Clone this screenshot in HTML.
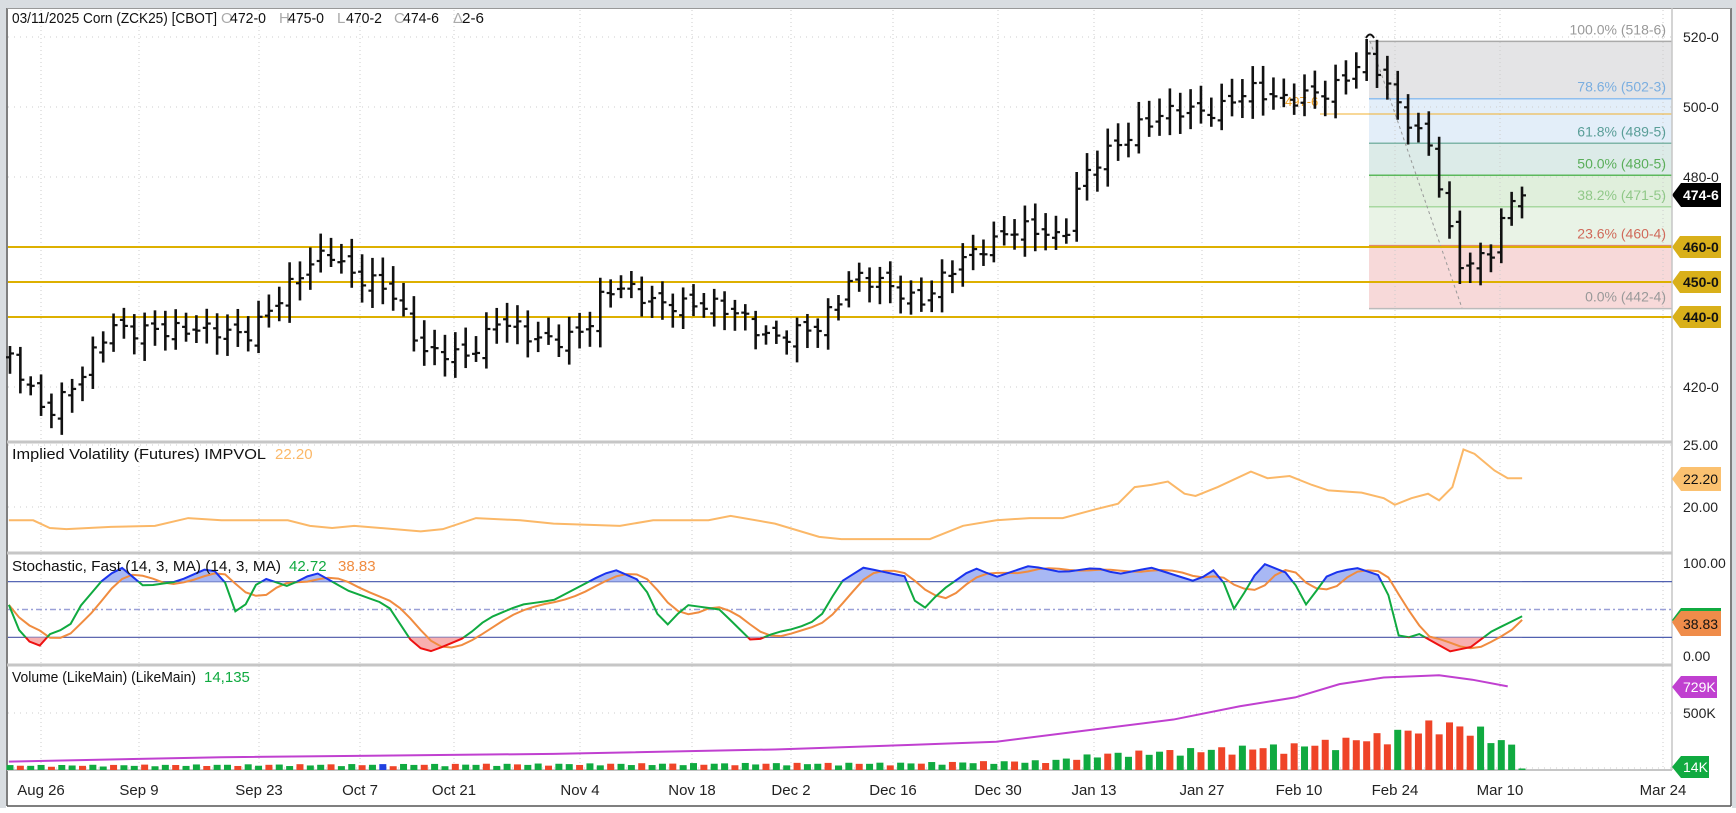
<!DOCTYPE html>
<html><head><meta charset="utf-8"><style>
html,body{margin:0;padding:0;background:#fff;}
body{width:1736px;height:808px;overflow:hidden;font-family:"Liberation Sans",sans-serif;}
svg text{font-family:"Liberation Sans",sans-serif;}
</style></head><body>
<svg id="s" width="1736" height="808" xmlns="http://www.w3.org/2000/svg">
<rect x="0" y="0" width="1736" height="808" fill="#fff"/>
<rect x="0" y="0" width="1736" height="8" fill="#d9dde1"/>
<rect x="0" y="0" width="6" height="808" fill="#d9dde1"/>
<rect x="1732" y="0" width="4" height="808" fill="#d9dde1"/>
<line x1="7" y1="8" x2="7" y2="806" stroke="#555" stroke-width="1.5"/>
<line x1="1731" y1="8" x2="1731" y2="806" stroke="#555" stroke-width="1.5"/>
<line x1="7" y1="806" x2="1731" y2="806" stroke="#555" stroke-width="1.5"/>
<line x1="7" y1="8.5" x2="1731" y2="8.5" stroke="#999" stroke-width="1"/>
<g id="g"></g>
</svg>
<script>
const NS="http://www.w3.org/2000/svg";const G=document.getElementById('g');
function el(t,a,txt){const e=document.createElementNS(NS,t);for(const k in a)e.setAttribute(k,a[k]);if(txt!=null)e.textContent=txt;G.appendChild(e);return e;}
const S=1.107;
function interp(pts,x){if(x<=pts[0][0])return pts[0][1];for(let i=1;i<pts.length;i++){if(x<=pts[i][0]){const a=pts[i-1],b=pts[i];return a[1]+(b[1]-a[1])*(x-a[0])/(b[0]-a[0]);}}return pts[pts.length-1][1];}
const R=1672, LX=1683, BE=1721;
const dates=[["Aug 26",41],["Sep 9",139],["Sep 23",259],["Oct 7",360],["Oct 21",454],["Nov 4",580],["Nov 18",692],["Dec 2",791],["Dec 16",893],["Dec 30",998],["Jan 13",1094],["Jan 27",1202],["Feb 10",1299],["Feb 24",1395],["Mar 10",1500],["Mar 24",1663]];
const fx=1369;
const fb=[[41.4,98.7,"#e4e4e6"],[98.7,143.3,"#e3eef9"],[143.3,175.3,"#dcebe8"],[175.3,206.8,"#e0efdc"],[206.8,245.6,"#e9f3e6"],[245.6,308.6,"#f7d9d9"]];
fb.forEach(b=>el('rect',{x:fx,y:b[0],width:R-fx,height:b[1]-b[0],fill:b[2]}));
for(const d of dates){el('line',{x1:d[1],y1:10,x2:d[1],y2:770,stroke:"#ccc","stroke-dasharray":"1,3"});el('text',{x:d[1],y:795,"font-size":"15","text-anchor":"middle",fill:"#222"},d[0]);}
function py(p){return 37+(520-p)*3.5;}
[520,500,480,420].forEach(p=>{el('line',{x1:8,y1:py(p),x2:R,y2:py(p),stroke:"#ccc","stroke-dasharray":"1,5"});el('text',{x:LX,y:py(p)+5,"font-size":"14",fill:"#222"},p+"-0");});
const fl=[[41.4,"#aaa","100.0% (518-6)","#999"],[98.7,"#90bfee","78.6% (502-3)","#7aaee0"],[143.3,"#7fb5a8","61.8% (489-5)","#5a9e98"],[175.3,"#5cb85c","50.0% (480-5)","#5aae5a"],[206.8,"#a8d8a0","38.2% (471-5)","#90c888"],[245.6,"#e08a70","23.6% (460-4)","#d06a5a"],[308.6,"#bbb","0.0% (442-4)","#999"]];
fl.forEach(f=>{el('line',{x1:fx,y1:f[0],x2:R,y2:f[0],stroke:f[1],"stroke-width":1.5});el('text',{x:R-6,y:f[0]-7,"font-size":"14","text-anchor":"end",fill:f[3]},f[2]);});
el('line',{x1:1320,y1:114,x2:R,y2:114,stroke:"#f0b030","stroke-width":1});
el('text',{x:1285,y:106,"font-size":"13",fill:"#f0a020"},"497-6");
el('line',{x1:1370,y1:41,x2:1462,y2:308,stroke:"#999","stroke-dasharray":"3,3"});
[[460,"460-0"],[450,"450-0"],[440,"440-0"]].forEach(g=>{const y=py(g[0]);el('line',{x1:8,y1:y,x2:R,y2:y,stroke:"#ddb000","stroke-width":2});el('path',{d:`M${R} ${y} L${R+8} ${y-11} L${BE} ${y-11} L${BE} ${y+11} L${R+8} ${y+11}Z`,fill:"#d9b01a"});el('text',{x:LX,y:y+5,"font-size":"14",fill:"#111","font-weight":"bold"},g[1]);});
const pp=[[8,427.7],[25,420],[40,413],[75,423],[100,438],[150,435],[180,438],[220,433],[245,444],[290,457],[300,459],[320,452],[355,446],[385,430],[420,428],[450,440],[480,433],[530,436],[545,446],[565,450],[600,442],[640,445],[660,441],[690,435],[740,436],[770,453],[800,448],[830,445],[860,453],[890,461],[910,465],[960,463],[975,479],[1000,486],[1030,496],[1060,498],[1100,500],[1130,504],[1170,503],[1200,503],[1230,515],[1240,513],[1265,498],[1295,489],[1305,468],[1320,453],[1345,458],[1360,472],[1375,474.75]];
let n=0;let prev=427;const NB=147;const step=(1522-10)/(NB-1);
for(let i=0;i<NB;i++){const x=10+i*step;n++;const dx=x/S;let c=interp(pp,dx);c+=Math.sin(n*2.3)*2+Math.sin(n*0.9)*1.1;if(i==NB-1)c=474.75;const o=prev+Math.sin(n*1.7)*1.5;const h=Math.max(o,c)+2+Math.abs(Math.sin(n*3.1))*3;const l=Math.min(o,c)-2-Math.abs(Math.cos(n*2.7))*3;prev=c;
el('line',{x1:x,y1:py(h),x2:x,y2:py(l),stroke:"#111","stroke-width":2.6});el('line',{x1:x-4,y1:py(o),x2:x,y2:py(o),stroke:"#111","stroke-width":2.2});el('line',{x1:x,y1:py(c),x2:x+4,y2:py(c),stroke:"#111","stroke-width":2.2});}
el('path',{d:"M1366 38 Q1370 31 1374 38",stroke:"#111",fill:"none","stroke-width":2});
el('path',{d:`M${R} 195 L${R+9} 183 L${BE} 183 L${BE} 207 L${R+9} 207Z`,fill:"#000"});
el('text',{x:LX,y:200,"font-size":"14",fill:"#fff","font-weight":"bold"},"474-6");
[442,553,665].forEach(y=>el('rect',{x:7,y:y-1.5,width:R-7,height:3,fill:"#c6c6c6"}));
el('line',{x1:R,y1:8,x2:R,y2:770,stroke:"#c6c6c6","stroke-width":1.5});
el('line',{x1:7,y1:770,x2:R,y2:770,stroke:"#c6c6c6","stroke-width":2});
// header
el('text',{x:12,y:23,"font-size":"15",fill:"#111",textLength:205,lengthAdjust:"spacingAndGlyphs"},"03/11/2025 Corn (ZCK25) [CBOT]");
const hd=[["O","472-0",221],["H","475-0",279],["L","470-2",337],["C","474-6",394],["Δ","2-6",453]];
for(const h of hd){el('text',{x:h[2],y:23,"font-size":"15",fill:"#aaa"},h[0]);el('text',{x:h[2]+9,y:23,"font-size":"15",fill:"#111",textLength:h[1].length==5?36:22,lengthAdjust:"spacingAndGlyphs"},h[1]);}
// IV
function iy(v){return 507-(v-20)*12.4;}
[[25,"25.00"],[20,"20.00"]].forEach(v=>{el('line',{x1:8,y1:iy(v[0]),x2:R,y2:iy(v[0]),stroke:"#ccc","stroke-dasharray":"1,5"});el('text',{x:LX,y:iy(v[0])+5,"font-size":"14",fill:"#222"},v[1]);});
const ivp=[[8,470],[30,470],[45,477],[60,478],[100,476],[140,475],[170,468],[200,470],[260,470],[280,475],[300,477],[320,475],[380,480],[400,478],[430,468],[470,470],[500,473],[560,475],[590,470],[640,470],[660,466],[700,473],[740,485],[760,487],[800,487],[840,487],[870,475],[900,470],[930,468],[960,468],[990,460],[1010,455],[1025,440],[1040,438],[1055,435],[1070,446],[1080,448],[1100,440],[1130,426],[1145,432],[1165,430],[1185,438],[1200,443],[1230,445],[1250,450],[1260,456],[1275,450],[1290,446],[1300,452],[1312,440],[1322,406],[1332,410],[1350,425],[1362,432],[1375,432]];
el('polyline',{points:ivp.map(p=>[p[0]*S,p[1]*S].join(',')).join(' '),fill:"none",stroke:"#fbb868","stroke-width":2});
el('path',{d:`M${R} 479 L${R+9} 467 L${BE} 467 L${BE} 491 L${R+9} 491Z`,fill:"#fbc170"});
el('text',{x:LX,y:484,"font-size":"14",fill:"#111"},"22.20");
el('text',{x:12,y:459,"font-size":"15",fill:"#111",textLength:254,lengthAdjust:"spacingAndGlyphs"},"Implied Volatility (Futures)  IMPVOL");
el('text',{x:275,y:459,"font-size":"15",fill:"#fbb868"},"22.20");
// Stoch
function sy(v){return 656-v*0.93;}
el('line',{x1:8,y1:sy(80),x2:R,y2:sy(80),stroke:"#5060b0","stroke-width":1.3});
el('line',{x1:8,y1:sy(20),x2:R,y2:sy(20),stroke:"#5060b0","stroke-width":1.3});
el('line',{x1:8,y1:sy(50),x2:R,y2:sy(50),stroke:"#9aa0d8","stroke-width":1.5,"stroke-dasharray":"6,3,2,3"});
el('text',{x:LX,y:sy(100)+5,"font-size":"14",fill:"#222"},"100.00");
el('text',{x:LX,y:sy(0)+5,"font-size":"14",fill:"#222"},"0.00");
const kp=[[8,55],[20,20],[35,10],[50,30],[60,25],[70,50],[95,85],[110,95],[130,75],[160,80],[185,93],[200,90],[215,40],[235,85],[260,75],[285,90],[315,70],[350,55],[375,10],[390,5],[420,20],[440,40],[470,55],[500,60],[540,85],[555,93],[580,80],[600,30],[620,55],[650,50],[680,15],[700,25],[720,30],[740,40],[760,80],[780,95],[820,85],[830,45],[850,70],[880,95],[900,85],[930,97],[960,90],[990,95],[1010,88],[1040,95],[1080,80],[1100,95],[1115,50],[1140,100],[1165,88],[1180,55],[1200,88],[1225,95],[1250,85],[1265,15],[1280,25],[1310,5],[1330,10],[1345,25],[1375,42.7]];
const K=[];for(let x=8;x<=1375;x+=9.3)K.push([x*S,interp(kp,x)]);K.push([1375*S,42.7]);
const D=K.map((p,i)=>{let s=0,c=0;for(let j=i-3;j<=i;j++)if(j>=0){s+=K[j][1];c++;}return [p[0],s/c];});D[D.length-1][1]=38.83;
const kpts=K.map(p=>p[0]+","+sy(p[1])).join(' ');
const defs=el('defs',{});
function clip(id,y1,y2){const c=document.createElementNS(NS,'clipPath');c.setAttribute('id',id);const r=document.createElementNS(NS,'rect');r.setAttribute('x',0);r.setAttribute('y',y1);r.setAttribute('width',1736);r.setAttribute('height',y2-y1);c.appendChild(r);defs.appendChild(c);}
clip('ca',550,sy(80));clip('cb',sy(20),670);clip('cm',sy(80),sy(20));
const x0=K[0][0],x1=K[K.length-1][0];
el('polygon',{points:`${x0},${sy(80)} ${kpts} ${x1},${sy(80)}`,fill:"#a8b8f4","clip-path":"url(#ca)"});
el('polygon',{points:`${x0},${sy(20)} ${kpts} ${x1},${sy(20)}`,fill:"#f8b0b0","clip-path":"url(#cb)"});
el('polyline',{points:D.map(p=>p[0]+","+sy(p[1])).join(' '),fill:"none",stroke:"#f08c40","stroke-width":2});
el('polyline',{points:kpts,fill:"none",stroke:"#1a33ee","stroke-width":2,"clip-path":"url(#ca)"});
el('polyline',{points:kpts,fill:"none",stroke:"#ee1111","stroke-width":2,"clip-path":"url(#cb)"});
el('polyline',{points:kpts,fill:"none",stroke:"#10aa40","stroke-width":2,"clip-path":"url(#cm)"});
el('path',{d:`M${R} 620 L${R+9} 608 L${BE} 608 L${BE} 632 L${R+9} 632Z`,fill:"#10aa40"});
el('path',{d:`M${R} 622 L${R+9} 611 L${BE} 611 L${BE} 636 L${R+9} 636Z`,fill:"#ef8c4a"});
el('text',{x:LX,y:629,"font-size":"14",fill:"#111"},"38.83");
el('text',{x:12,y:571,"font-size":"15",fill:"#111",textLength:269,lengthAdjust:"spacingAndGlyphs"},"Stochastic, Fast (14, 3, MA)  (14, 3, MA)");
el('text',{x:289,y:571,"font-size":"15",fill:"#10aa40"},"42.72");
el('text',{x:338,y:571,"font-size":"15",fill:"#f08c40"},"38.83");
// Volume
el('line',{x1:8,y1:713,x2:R,y2:713,stroke:"#ccc","stroke-dasharray":"1,5"});
el('text',{x:LX,y:718,"font-size":"14",fill:"#222"},"500K");
el('line',{x1:8,y1:768,x2:R,y2:768,stroke:"#ccc","stroke-dasharray":"1,5"});
n=0;const vh=[[0,4],[900,6],[1050,8],[1100,14],[1200,18],[1300,22],[1380,30],[1440,42],[1480,35],[1510,22]];
for(let i=0;i<NB;i++){const x=10+i*step;n++;let h=interp(vh,x)*(0.75+0.5*Math.abs(Math.sin(n*1.9)));if(i==NB-1)h=1.5;const up=Math.sin(n*2.1+0.5)>-0.1;let col=up?"#10aa40":"#ef4428";if(x>1340&&x<1480&&n%5!=0)col="#ef4428";if(x>1480)col="#10aa40";if(n==37)col="#2040e0";el('rect',{x:x-3.5,y:770-h,width:7,height:h,fill:col});}
const mv=[[8,688],[200,684],[500,681],[700,677],[820,673],[900,670],[980,660],[1060,650],[1120,638],[1170,630],[1210,618],[1250,612],[1300,610],[1330,614],[1362,620]];
el('polyline',{points:mv.map(p=>[p[0]*S,p[1]*S].join(',')).join(' '),fill:"none",stroke:"#c040d0","stroke-width":2});
el('path',{d:`M${R} 687 L${R+9} 676 L${BE-4} 676 L${BE-4} 698 L${R+9} 698Z`,fill:"#c040d0"});
el('text',{x:LX,y:692,"font-size":"14",fill:"#fff"},"729K");
el('path',{d:`M${R} 767 L${R+9} 756 L${BE-12} 756 L${BE-12} 778 L${R+9} 778Z`,fill:"#10aa40"});
el('text',{x:LX,y:772,"font-size":"14",fill:"#fff"},"14K");
el('text',{x:12,y:682,"font-size":"15",fill:"#111",textLength:184,lengthAdjust:"spacingAndGlyphs"},"Volume (LikeMain)  (LikeMain)");
el('text',{x:204,y:682,"font-size":"15",fill:"#10aa40"},"14,135");
</script>
</body></html>
